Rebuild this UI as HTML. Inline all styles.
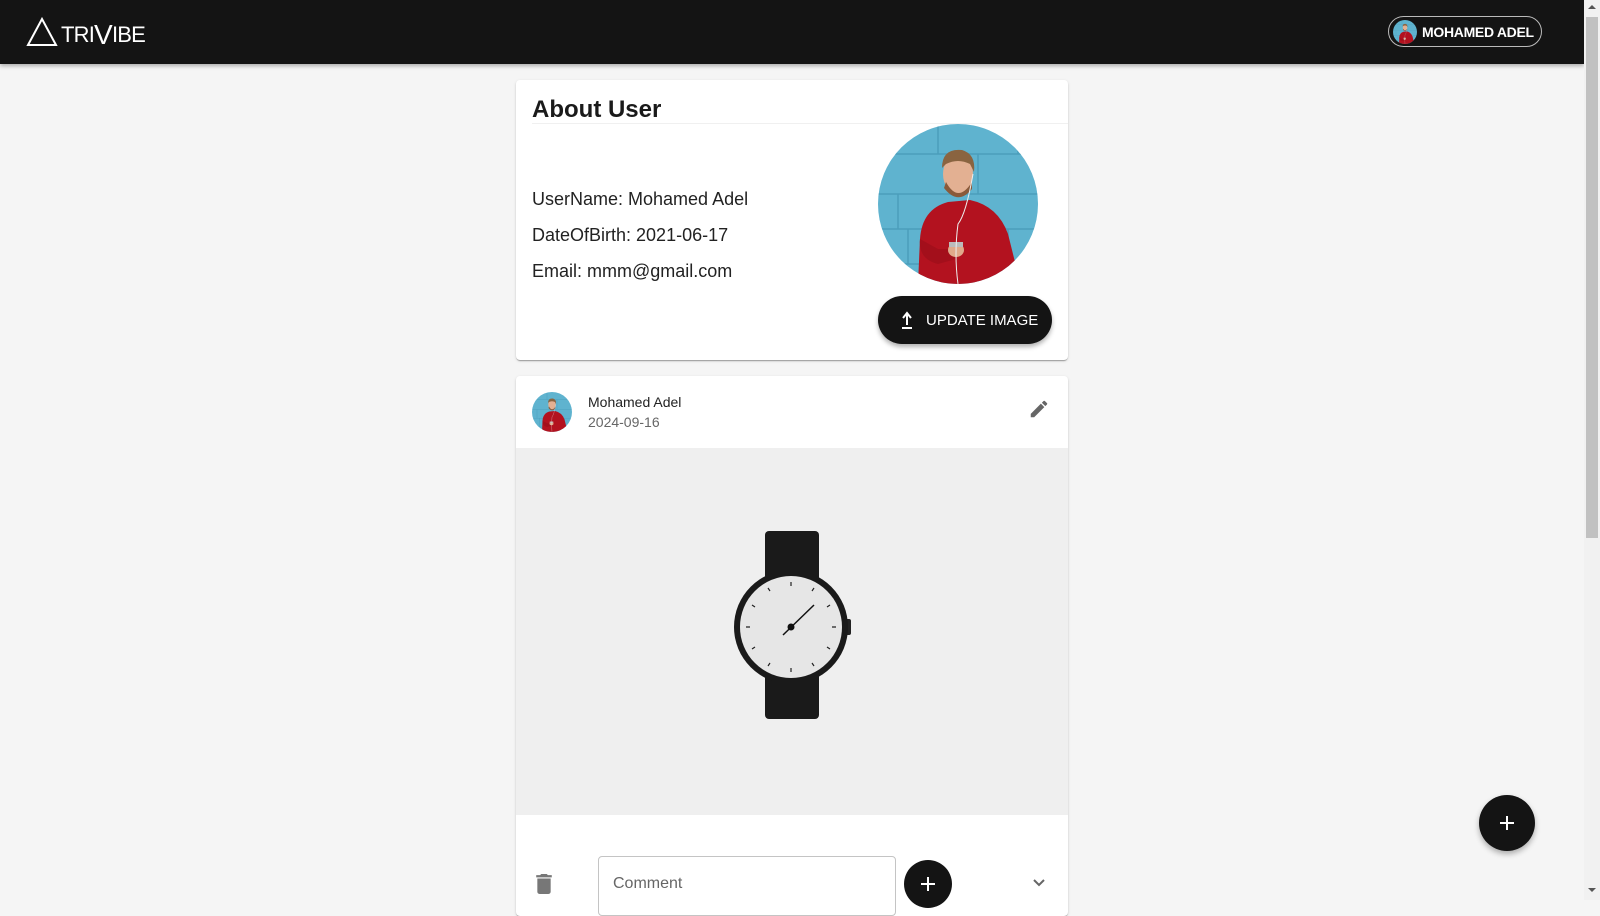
<!DOCTYPE html>
<html><head><meta charset="utf-8"><style>
*{box-sizing:border-box;margin:0;padding:0}
body{width:1600px;height:900px;overflow:hidden;background:#f5f5f5;font-family:"Liberation Sans",sans-serif;position:relative}
.hdr{position:absolute;left:0;top:0;width:1584px;height:64px;background:#141414;box-shadow:0 2px 4px rgba(0,0,0,.3)}
.sb{position:absolute;left:1584px;top:0;width:16px;height:900px;background:#f1f1f1}
.sb .th{position:absolute;left:2px;top:17px;width:12px;height:521px;background:#c1c1c1}
.card{position:absolute;left:516px;width:552px;background:#fff;border-radius:4px;box-shadow:0 2px 1px -1px rgba(0,0,0,.2),0 1px 1px rgba(0,0,0,.14),0 1px 3px rgba(0,0,0,.12)}
.t{position:absolute;color:#111}
</style></head><body>
<svg width="0" height="0" style="position:absolute"><defs>
<symbol id="p" viewBox="0 0 160 160">
<rect width="160" height="160" fill="#5fb3cf"/>
<g stroke="#3f8fae" stroke-width="1.5" opacity=".6"><path d="M0 30H160M0 70H160M0 105H160M0 140H160M60 0V30M100 30V70M20 70V105M140 0V30M130 105V140M30 105V140"/></g>
<path d="M40 160 L42 115 Q44 85 70 78 L92 76 Q120 82 130 110 L140 150 L140 160Z" fill="#b3121f"/>
<path d="M42 115 Q40 135 60 140 L78 135 L76 125 L60 125Z" fill="#a30f1b"/>
<ellipse cx="78" cy="126" rx="8" ry="7" fill="#e0a98a"/>
<rect x="71" y="118" width="14" height="5" fill="#bbb"/>
<ellipse cx="80" cy="50" rx="15" ry="20" fill="#e3b092"/>
<path d="M68 58 Q80 80 94 58 L94 65 Q80 82 66 64Z" fill="#8a5a3a"/>
<path d="M64 44 Q64 24 84 26 Q98 30 96 48 L92 40 Q80 34 68 40Z" fill="#8a6440"/>
<path d="M95 50 Q88 90 80 100 Q76 130 80 160" stroke="#eee" stroke-width="1" fill="none"/>
</symbol></defs></svg>

<div class="hdr">
<svg style="position:absolute;left:26px;top:17px" width="32" height="30"><path d="M16 2 L30 28 H2Z" fill="none" stroke="#fff" stroke-width="2"/></svg>
<div style="position:absolute;left:61px;top:17px;color:#fff;font-size:22px;letter-spacing:-0.8px">TRI<span style="font-size:28px;position:relative;top:2px">V</span>IBE</div>
<div style="position:absolute;left:1388px;top:16px;width:154px;height:31px;border:1px solid #bbb;border-radius:16px">
<svg style="position:absolute;left:4px;top:3px;border-radius:50%" width="24" height="24"><use href="#p" width="24" height="24"/></svg>
<div style="position:absolute;left:33px;top:7px;color:#fff;font-size:14px;font-weight:bold;letter-spacing:-0.3px">MOHAMED ADEL</div>
</div>
</div>
<div class="sb"><div class="th"></div>
<div style="position:absolute;left:4px;top:5px;border:4px solid transparent;border-bottom:4px solid #555;border-top:0"></div>
<div style="position:absolute;left:4px;top:888px;border:4px solid transparent;border-top:4px solid #555;border-bottom:0"></div></div>

<div class="card" style="top:80px;height:280px">
<div class="t" style="left:16px;top:16px;font-size:24px;font-weight:bold;color:#1a1a1a">About User</div>
<div style="position:absolute;left:16px;right:0;top:43px;border-top:1px solid #f0f0f0"></div>
<div class="t" style="left:16px;top:101px;font-size:18px;color:#222;line-height:36px">UserName: Mohamed Adel<br>DateOfBirth: 2021-06-17<br>Email: mmm@gmail.com</div>
<svg style="position:absolute;left:362px;top:44px;border-radius:50%" width="160" height="160"><use href="#p" width="160" height="160"/></svg>
<div style="position:absolute;left:362px;top:216px;width:174px;height:48px;border-radius:24px;background:#141414;box-shadow:0 3px 5px rgba(0,0,0,.3);color:#fff;font-size:15px">
<svg style="position:absolute;left:22px;top:15px" width="14" height="18"><path d="M7 14V3M3 7L7 2L11 7" stroke="#fff" stroke-width="2" fill="none"/><path d="M2 17H12" stroke="#fff" stroke-width="2"/></svg>
<div style="position:absolute;left:48px;top:16px">UPDATE IMAGE</div></div>
</div>

<div class="card" style="top:376px;height:540px">
<svg style="position:absolute;left:16px;top:16px;border-radius:50%" width="40" height="40"><use href="#p" width="40" height="40"/></svg>
<div class="t" style="left:72px;top:18px;font-size:14px;color:#222">Mohamed Adel</div>
<div class="t" style="left:72px;top:38px;font-size:14px;color:#666">2024-09-16</div>
<svg style="position:absolute;left:512px;top:22px" width="22" height="22" viewBox="0 0 24 24"><path d="M3 17.25V21h3.75L17.81 9.94l-3.75-3.75L3 17.25zM20.71 7.04a1 1 0 000-1.41l-2.34-2.34a1 1 0 00-1.41 0l-1.83 1.83 3.75 3.75 1.83-1.83z" fill="#666"/></svg>
<div style="position:absolute;left:0;top:72px;width:552px;height:367px;background:#efefef">
<svg style="position:absolute;left:200px;top:79px" width="150" height="200" viewBox="0 0 150 200">
<rect x="49" y="4" width="54" height="66" rx="4" fill="#1a1a1a"/>
<rect x="49" y="126" width="54" height="66" rx="4" fill="#1a1a1a"/>
<rect x="128" y="92" width="7" height="16" rx="2" fill="#222"/>
<circle cx="75" cy="100" r="57" fill="#1a1a1a"/>
<circle cx="75" cy="100" r="51" fill="#e6e6e6"/>
<g stroke="#222" stroke-width="1.2">
<path d="M75 55V59M75 141V145M30 100H34M116 100H120M98 61L96 64M52 139L54 136M114 78L111 80M36 122L39 120M114 122L111 120M36 78L39 80M98 139L96 136M52 61L54 64"/>
</g>
<path d="M67 108L98 78" stroke="#111" stroke-width="1.5"/>
<circle cx="75" cy="100" r="3.5" fill="#111"/>
</svg></div>
<svg style="position:absolute;left:20px;top:498px" width="16" height="20" viewBox="0 0 14 18"><path d="M1 16c0 1.1.9 2 2 2h8c1.1 0 2-.9 2-2V4H1v12zM14 1h-3.5l-1-1h-5l-1 1H0v2h14V1z" fill="#777"/></svg>
<div style="position:absolute;left:82px;top:480px;width:298px;height:60px;border:1px solid #c4c4c4;border-radius:4px">
<div style="position:absolute;left:14px;top:18px;color:#666;font-size:16px">Comment</div></div>
<div style="position:absolute;left:388px;top:484px;width:48px;height:48px;border-radius:50%;background:#141414">
<svg style="position:absolute;left:16px;top:16px" width="16" height="16"><path d="M8 1V15M1 8H15" stroke="#fff" stroke-width="2"/></svg></div>
<svg style="position:absolute;left:516px;top:502px" width="14" height="10"><path d="M2 2L7 7L12 2" stroke="#666" stroke-width="2" fill="none"/></svg>
</div>

<div style="position:absolute;left:1479px;top:795px;width:56px;height:56px;border-radius:50%;background:#141414;box-shadow:0 3px 6px rgba(0,0,0,.3)">
<svg style="position:absolute;left:20px;top:20px" width="16" height="16"><path d="M8 1V15M1 8H15" stroke="#fff" stroke-width="2"/></svg></div>
</body></html>
